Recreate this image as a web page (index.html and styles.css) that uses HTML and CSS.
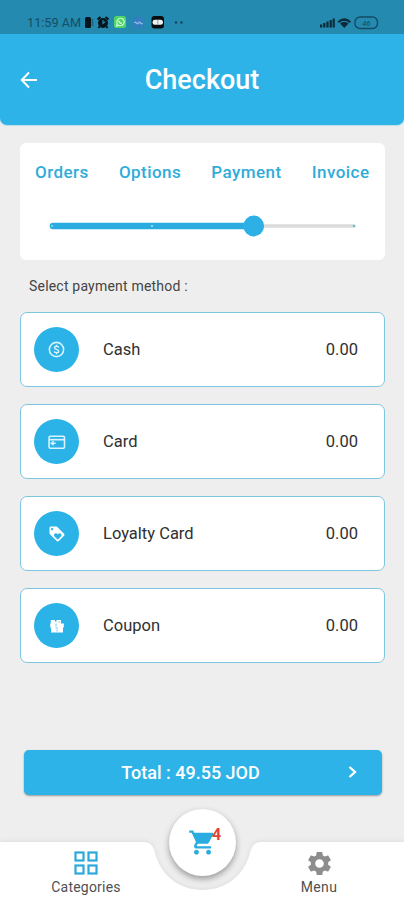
FILE: index.html
```html
<!DOCTYPE html>
<html lang="en">
<head>
<meta charset="utf-8">
<title>Checkout</title>
<link rel="stylesheet" href="styles.css">
</head>
<body>
<div class="app">
  <div class="status">
    <span class="time">11:59 AM</span>
    <svg class="status-left" width="102" height="18" viewBox="0 0 102 18">
      <rect x="2" y="4" width="6" height="11" rx="1.500" fill="#06151c"/>
      <path d="M9.500 6v7" stroke="#1b6280" stroke-width="1.500"/>
      <circle cx="20" cy="10" r="5" fill="#06151c"/>
      <path d="M14.500 6.500l3-2.500M25.500 6.500l-3-2.500M16.500 13.500l-1 1.500M23.500 13.500l1 1.500" stroke="#06151c" stroke-width="2"/>
      <path d="M20 7v3.300l2-1.500" fill="none" stroke="#278bb0" stroke-width="1.200"/>
      <rect x="31" y="3" width="12" height="12" rx="2.500" fill="#4fd566"/>
      <path d="M33.500 13l.7-2.400a3.700 3.700 0 1 1 1.500 1.600z" fill="none" stroke="#d9ffe0" stroke-width="1.100"/>
      <path d="M35.700 7.500q.4 2.600 3 3" fill="none" stroke="#d9ffe0" stroke-width="1.300"/>
      <circle cx="55.500" cy="9.500" r="6" fill="#327fc0"/>
      <path d="M51.500 10q1-1.500 2 0t2 0 2 0 2 0" fill="none" stroke="#8fbfe2" stroke-width="1.300"/>
      <rect x="68.500" y="3" width="12.500" height="12.500" rx="3" fill="#080d10"/>
      <rect x="69.500" y="6.800" width="10.500" height="5" rx="2.400" fill="#eef2f3"/>
      <path d="M74.800 7v4.500" stroke="#777" stroke-width=".7"/>
      <circle cx="93" cy="9.500" r="1.200" fill="#11445a"/>
      <circle cx="98.500" cy="9.500" r="1.200" fill="#11445a"/>
    </svg>
    <svg class="status-right" width="60" height="16" viewBox="0 0 60 16">
      <g fill="#0c2b38">
        <rect x="1" y="9.500" width="2.200" height="3"/>
        <rect x="4.200" y="8" width="2.200" height="4.500"/>
        <rect x="7.400" y="6.500" width="2.200" height="6"/>
        <rect x="10.600" y="5" width="2.200" height="7.500"/>
        <rect x="13.600" y="3.500" width="2.200" height="9"/>
        <path d="M18.500 6.500Q25.500 0 32 6.500L30.500 8Q25.300 3.500 20 8z"/>
        <path d="M21 8.500Q25.300 5 29.500 8.500L25.300 13z"/>
      </g>
      <rect x="36" y="2" width="22.500" height="11.500" rx="5" fill="none" stroke="#154b62" stroke-width="1.400"/>
      <text x="47.300" y="10.800" class="battery">46</text>
    </svg>
  </div>
  <header class="header">
    <svg class="back" width="18" height="18" viewBox="0 0 18 18"><path d="M9 1.500 1.800 9 9 16.500M2 9h15" fill="none" stroke="#fff" stroke-width="2"/></svg>
    <h1 class="title">Checkout</h1>
  </header>
  <main class="content">
    <section class="steps">
      <div class="labels"><span>Orders</span><span>Options</span><span>Payment</span><span>Invoice</span></div>
      <svg class="slider" width="365" height="24" viewBox="0 0 365 24">
        <path d="M233 12H334" stroke="#dcdcdc" stroke-width="3.500" stroke-linecap="round"/>
        <path d="M33 12H233" stroke="#2bace0" stroke-width="6.600" stroke-linecap="round"/>
        <circle cx="32" cy="12" r="1" fill="#8fd7f2"/>
        <circle cx="132" cy="12" r="1" fill="#b5e6f8"/>
        <circle cx="334" cy="12" r="1.300" fill="#66c8c4"/>
        <circle cx="233.700" cy="12" r="10.400" fill="#2cb0e5"/>
      </svg>
    </section>
    <p class="prompt">Select payment method :</p>
    <div class="methods">
      <div class="method">
        <span class="disc"><svg width="19" height="19" viewBox="0 0 24 24"><circle cx="12" cy="12" r="9" fill="none" stroke="#d9f4ff" stroke-width="2"/><path d="M14.800 9.500Q14.500 7.900 12 7.900T9.400 9.800Q9.400 11.300 12 11.900T14.700 14.100Q14.700 16 12 16T9.200 14.400M12 6v2M12 16v2" fill="none" stroke="#d9f4ff" stroke-width="1.700"/></svg></span>
        <span class="name">Cash</span><span class="amount">0.00</span>
      </div>
      <div class="method">
        <span class="disc"><svg width="20" height="20" viewBox="0 0 24 24"><rect x="2.500" y="5" width="18.500" height="14.500" rx="1.500" fill="none" stroke="#d9f4ff" stroke-width="1.900"/><path d="M2.500 9.200h18.500" stroke="#d9f4ff" stroke-width="2"/><path d="M10.500 13.500H5.500M8 11l-3 2.500L8 16" fill="none" stroke="#d9f4ff" stroke-width="1.600"/></svg></span>
        <span class="name">Card</span><span class="amount">0.00</span>
      </div>
      <div class="method">
        <span class="disc"><svg width="18" height="18" viewBox="0 0 24 24"><path fill="#fff" d="M21.410 11.580l-9-9C12.050 2.220 11.550 2 11 2H4c-1.100 0-2 .9-2 2v7c0 .55.220 1.050.590 1.420l9 9c.36.360.860.580 1.410.580s1.050-.220 1.410-.590l7-7c.370-.360.590-.860.590-1.410s-.230-1.060-.590-1.420zM5.500 7C4.670 7 4 6.330 4 5.500S4.670 4 5.500 4 7 4.670 7 5.500 6.330 7 5.500 7zm11.770 8.270L13 19.540l-4.270-4.270C8.280 14.810 8 14.190 8 13.500c0-1.380 1.120-2.500 2.500-2.500.690 0 1.320.280 1.770.740l.730.720.730-.730c.450-.450 1.080-.730 1.770-.730 1.380 0 2.500 1.120 2.500 2.500 0 .690-.280 1.320-.730 1.770z"/></svg></span>
        <span class="name">Loyalty Card</span><span class="amount">0.00</span>
      </div>
      <div class="method">
        <span class="disc"><svg width="16" height="16" viewBox="0 0 16 16"><path fill="#fff" d="M1.800 2H6v1.500h1.500V2H12v3.500h2.800v4H14v5H2v-5H1.200v-4h.6z"/><path d="M7 5.500v3M9.500 4h1.800M6.500 10h2.500M8 11.500v2" stroke="#5cc5ef" stroke-width=".9"/></svg></span>
        <span class="name">Coupon</span><span class="amount">0.00</span>
      </div>
    </div>
    <div class="total"><span class="total-text">Total : 49.55 JOD</span><svg class="chevron" width="10" height="14" viewBox="0 0 10 14"><path d="M1.500 2 7 7l-5.500 5" fill="none" stroke="#fff" stroke-width="2.300"/></svg></div>
  </main>
  <nav class="nav">
    <svg class="nav-shape" width="404" height="70" viewBox="0 0 404 70"><path d="M0 12H144Q152 12 154.500 21C160 45 179 60 202.500 60S245 45 250.500 21Q253 12 261 12H404V70H0z" fill="#fff"/></svg>
    <div class="tab categories">
      <svg width="24" height="24" viewBox="0 0 24 24" fill="none" stroke="#2aa9da" stroke-width="2.200"><rect x="1.500" y="1.500" width="8" height="8"/><rect x="14.500" y="1.500" width="8" height="8"/><rect x="1.500" y="14.500" width="8" height="8"/><rect x="14.500" y="14.500" width="8" height="8"/></svg>
      <span>Categories</span>
    </div>
    <div class="tab menu">
      <svg width="29" height="29" viewBox="0 0 24 24"><path fill="#8d8d8d" d="M19.140 12.940c.040-.3.060-.610.060-.940 0-.320-.020-.640-.070-.940l2.030-1.580c.180-.140.230-.410.120-.610l-1.920-3.320c-.120-.220-.370-.290-.590-.220l-2.390.960c-.5-.380-1.030-.7-1.620-.940l-.360-2.540c-.040-.240-.240-.410-.480-.410h-3.840c-.240 0-.430.170-.470.410l-.360 2.540c-.590.240-1.130.570-1.620.940l-2.390-.960c-.220-.080-.470 0-.590.220L2.740 8.870c-.120.210-.080.470.120.610l2.030 1.580c-.050.3-.090.630-.090.940s.020.640.070.940l-2.030 1.580c-.180.140-.230.410-.120.610l1.920 3.320c.120.220.370.290.590.220l2.390-.960c.5.380 1.030.7 1.620.940l.360 2.540c.050.240.240.410.480.410h3.840c.240 0 .440-.170.470-.410l.360-2.540c.590-.240 1.130-.560 1.620-.940l2.390.960c.220.080.470 0 .590-.220l1.920-3.320c.120-.220.070-.470-.120-.610l-2.010-1.580zM12 15.600c-1.980 0-3.600-1.620-3.600-3.600s1.620-3.600 3.600-3.600 3.600 1.620 3.600 3.600-1.620 3.600-3.600 3.600z"/></svg>
      <span>Menu</span>
    </div>
    <div class="cart">
      <svg width="29" height="29" viewBox="0 0 24 24"><path fill="#2aace0" d="M7 18c-1.100 0-1.990.9-1.990 2S5.900 22 7 22s2-.9 2-2-.9-2-2-2zM1 2v2h2l3.600 7.590-1.350 2.450c-.160.280-.250.610-.250.960 0 1.100.9 2 2 2h12v-2H7.420c-.140 0-.250-.110-.250-.250l.030-.120.900-1.630h7.450c.750 0 1.410-.410 1.750-1.030l3.580-6.490A1 1 0 0 0 20 4H5.210l-.940-2H1zm16 16c-1.100 0-1.990.9-1.990 2s.890 2 1.990 2 2-.9 2-2-.9-2-2-2z"/></svg>
      <span class="count">4</span>
    </div>
  </nav>
</div>
</body>
</html>
```
FILE: styles.css
```css
* { box-sizing: border-box; }
body { margin: 0; font-family: Roboto, "Liberation Sans", sans-serif; }
svg { display: block; flex: none; }
.app { width: 404px; height: 900px; background: #eee; display: flex; flex-direction: column; overflow: hidden; }
.status { height: 34px; flex: none; background: #248ab0; display: flex; align-items: flex-start; padding: 13px 25px 0 27px; }
.time { width: 56px; font-size: 12.700px; line-height: 20px; color: #154e65; white-space: nowrap; }
.status-right { margin: 2px 0 0 auto; }
.battery { font-size: 8px; font-style: italic; fill: #154b62; text-anchor: middle; }
.header { height: 91px; flex: none; background: #2db3e7; border-radius: 0 0 7px 7px; display: grid; grid-template-columns: 41px 1fr 41px; align-items: center; box-shadow: 0 1px 1px #bcdce8; }
.back { margin-left: 20px; }
.title { margin: 0; font-size: 27px; font-weight: 500; line-height: 32px; color: #fff; text-align: center; }
.content { flex: 1; display: flex; flex-direction: column; padding: 18px 19px 0 20px; }
.steps { height: 117px; flex: none; background: #fff; border-radius: 6px; padding-top: 17px; }
.labels { display: flex; justify-content: space-between; padding: 0 15.500px 0 15px; font-size: 17px; font-weight: 500; line-height: 24px; letter-spacing: .45px; color: #30acd8; }
.slider { margin-top: 30px; }
.prompt { margin: 16px 0 0 9px; font-size: 14px; line-height: 20px; color: #444; letter-spacing: .2px; }
.methods { display: grid; gap: 17px; margin-top: 16px; }
.method { height: 75px; border: 1.500px solid #7ec6df; border-radius: 7px; background: #fff; display: flex; align-items: center; padding: 0 26px 0 13px; font-size: 16.500px; line-height: 20px; color: #303030; }
.disc { width: 45px; height: 45px; border-radius: 50%; background: #2bb2e7; display: flex; align-items: center; justify-content: center; }
.name { margin-left: 24px; }
.amount { margin-left: auto; }
.total { height: 45px; margin: 87px 3px 0 4px; border-radius: 5px; background: #2db3e7; color: #fff; display: grid; grid-template-columns: 40px 1fr 40px; align-items: center; box-shadow: 0 1px 2px #999; }
.total-text { grid-column: 2; text-align: center; font-size: 18px; font-weight: 500; padding-right: 25px; }
.chevron { grid-column: 3; margin: -1px 0 0 6px; }
.nav { height: 70px; flex: none; position: relative; display: grid; grid-template-columns: 172px 60px 172px; }
.nav-shape { position: absolute; inset: 0; filter: drop-shadow(0 -1px 2px #ddd); }
.tab { position: relative; display: flex; flex-direction: column; align-items: center; font-size: 14px; line-height: 18px; color: #505050; }
.categories { padding-top: 21px; gap: 3px; grid-column: 1; letter-spacing: .2px; }
.menu { padding: 19px 0 0 2px; grid-column: 3; letter-spacing: .4px; }
.cart { position: absolute; left: 169px; top: -21px; width: 67px; height: 67px; border-radius: 50%; background: #fff; display: flex; align-items: center; justify-content: center; box-shadow: 0 3px 6px #999; }
.count { position: absolute; left: 43px; top: 17px; font-size: 16px; line-height: 18px; font-weight: 700; color: #e34335; }
```
